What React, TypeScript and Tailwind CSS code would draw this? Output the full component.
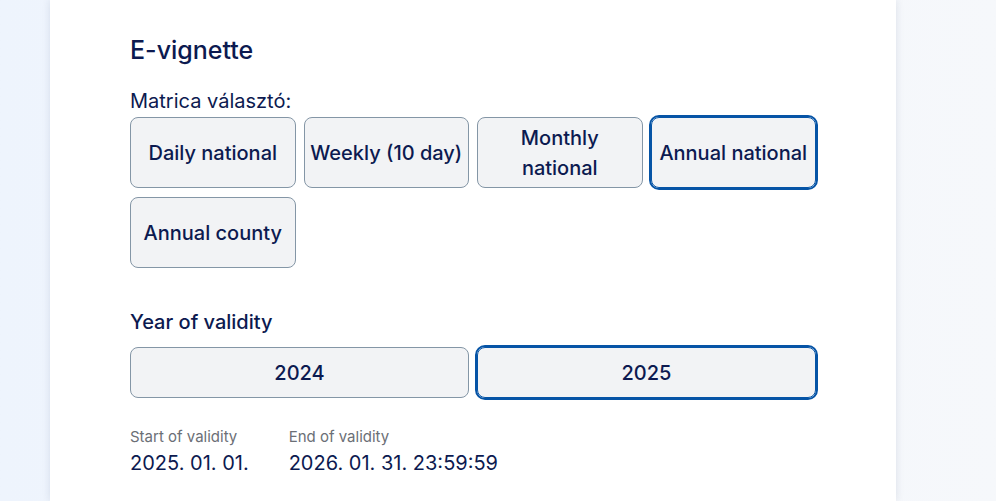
import React, { useState } from "react";

const vignettes = ["Daily national", "Weekly (10 day)", "Monthly national", "Annual national", "Annual county"];
const years = ["2024", "2025"];

const App = () => {
  const [selected, setSelected] = useState<string>("Annual national");
  const [year, setYear] = useState<string>("2025");

  return (
    <div
      className="min-h-screen w-full bg-gradient-to-r from-[#eef4fd] to-[#f6f8fb] font-['Inter',sans-serif] text-[#0c1a50]"
    >
      <div className="ml-[50px] min-h-[501px] w-[846px] bg-white pl-[80px] pr-[80px] pt-[34px] shadow-[0_0_8px_rgba(30,50,90,0.12)]">
        <h1 className="text-[25px] font-medium leading-[32px]">E-vignette</h1>

        <div className="mt-[23px] text-[20px] leading-[24px]">Matrica választó:</div>
        <div className="mt-[4px] grid w-[686px] grid-cols-4 gap-x-2 gap-y-[9px]">
          {vignettes.map((v) => (
            <button
              key={v}
              onClick={() => setSelected(v)}
              className={
                selected === v
                  ? "flex h-[71px] items-center justify-center rounded-lg border border-[#0654a6] bg-[#f2f3f5] px-1 text-center text-[20px] font-medium leading-[30px] outline-2 outline-[#0654a6]"
                  : "flex h-[71px] items-center justify-center rounded-lg border border-[#8496a6] bg-[#f2f3f5] px-1 text-center text-[20px] font-medium leading-[30px]"
              }
            >
              {v}
            </button>
          ))}
        </div>

        <div className="mt-[42px] text-[20px] font-medium leading-[24px]">Year of validity</div>
        <div className="mt-[13px] grid w-[686px] grid-cols-2 gap-2">
          {years.map((y) => (
            <button
              key={y}
              onClick={() => setYear(y)}
              className={
                year === y
                  ? "flex h-[51px] items-center justify-center rounded-lg border border-[#0654a6] bg-[#f2f3f5] text-[20px] font-medium outline-2 outline-[#0654a6]"
                  : "flex h-[51px] items-center justify-center rounded-lg border border-[#8496a6] bg-[#f2f3f5] text-[20px] font-medium"
              }
            >
              {y}
            </button>
          ))}
        </div>

        <div className="mt-[29px] flex gap-10">
          <div>
            <div className="text-[15px] leading-[20px] text-[#6b6f76]">Start of validity</div>
            <div className="mt-[2px] text-[20px] leading-[28px]">2025. 01. 01.</div>
          </div>
          <div>
            <div className="text-[15px] leading-[20px] text-[#6b6f76]">End of validity</div>
            <div className="mt-[2px] text-[20px] leading-[28px]">2026. 01. 31. 23:59:59</div>
          </div>
        </div>
      </div>
    </div>
  );
};

export default App;
